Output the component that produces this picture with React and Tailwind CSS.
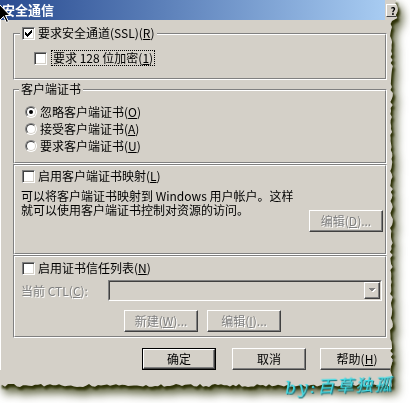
import React from 'react';

const tornClip = () => {
  let s = 11;
  const rnd = () => {
    s = (s * 9301 + 49297) % 233280;
    return s / 233280;
  };
  const pts = ['0px 0px', '399px 0px'];
  for (let y = 0; y <= 384; y += 3) {
    const base = y < 20 ? 398 : 393;
    pts.push(`${(base - rnd() * 3).toFixed(1)}px ${y}px`);
  }
  for (let x = 392; x >= 0; x -= 3) {
    pts.push(`${x}px ${(387 - rnd() * 3).toFixed(1)}px`);
  }
  pts.push('0px 386px');
  return `polygon(${pts.join(',')})`;
};

const Check = ({ checked }) => (
  <span className="relative block w-[13px] h-[13px] shrink-0 bg-white border border-t-[#808080] border-l-[#808080] border-r-white border-b-white shadow-[inset_1px_1px_0_#404040,inset_-1px_-1px_0_#d4d0c8]">
    {checked && (
      <svg className="absolute left-[1px] top-[1px]" width="9" height="9" viewBox="0 0 9 9" shapeRendering="crispEdges">
        <path d="M1 3h1v1h1v1h1V4h1V3h1V2h1V1h1v3H7v1H6v1H5v1H4v1H3V7H2V6H1z" fill="#000" />
      </svg>
    )}
  </span>
);

const Radio = ({ checked }) => (
  <span className="relative block w-[12px] h-[12px] shrink-0 rounded-full bg-white border border-t-[#808080] border-l-[#808080] border-r-white border-b-white">
    <span className="absolute inset-0 rounded-full border border-t-[#404040] border-l-[#404040] border-r-[#d4d0c8] border-b-[#d4d0c8]" />
    {checked && <span className="absolute left-[3px] top-[3px] w-[4px] h-[4px] rounded-full bg-black" />}
  </span>
);

const Btn = ({ children, disabled, className = '' }) => (
  <div
    className={`flex items-center justify-center w-[74px] h-[22px] bg-[#d4d0c8] border border-t-white border-l-white border-r-[#404040] border-b-[#404040] shadow-[inset_-1px_-1px_0_#808080] ${
      disabled ? 'text-[#808080] [text-shadow:1px_1px_0_#fff]' : 'text-black'
    } ${className}`}
  >
    {children}
  </div>
);

const Group = ({ label, className = '', children }) => (
  <div className={`relative ml-[12px] w-[374px] border border-t-[#808080] border-l-[#808080] border-r-white border-b-white ${className}`}>
    <div className="h-full border border-t-white border-l-white border-r-[#808080] border-b-[#808080]">{children}</div>
    {label}
  </div>
);

const Cursor = () => (
  <svg className="absolute left-[-2px] top-[4px]" width="13" height="20" viewBox="0 0 13 20">
    <path d="M1.5 0.5 L1.5 16.5 L5.5 12.5 L8.5 18.5 L10.5 17.5 L7.5 11.5 L12 11.5 Z" fill="#000" stroke="#fff" strokeWidth="1" />
  </svg>
);

export default function App() {
  return (
    <div className="relative w-[410px] h-[403px] bg-white overflow-hidden font-['Noto_Sans_CJK_SC','Noto_Sans',sans-serif] text-[12px] leading-[14px] text-black">
      <div className="[filter:drop-shadow(2px_3px_1px_#2d3106)_drop-shadow(3px_5px_5px_rgba(50,55,10,0.8))]">
        <div className="w-[400px] h-[392px] bg-[#d4d0c8] flex flex-col" style={{ clipPath: tornClip() }}>
          <div className="flex h-[20px] shrink-0">
            <div className="flex items-center w-[387px] bg-linear-to-r from-[#2a4b90] to-[#a8ccf2] pl-[2px]">
              <span className="text-white font-bold text-[13px] leading-[16px]">安全通信</span>
            </div>
            <div className="mt-[4px] ml-[1px] w-[14px] h-[13px] flex items-center justify-center bg-[#d4d0c8] border border-t-white border-l-white border-r-[#404040] border-b-[#404040] text-[10px] font-bold leading-[10px]">
              ?
            </div>
          </div>

          <div className="flex flex-col pt-[13px] border-l border-l-white">
            <Group
              className="h-[47px]"
              label={
                <div className="absolute left-[6px] -top-[9px] h-[16px] px-[2px] bg-[#d4d0c8] flex items-center gap-[3px]">
                  <Check checked />
                  <span>
                    要求安全通道(SSL)(<u>R</u>)
                  </span>
                </div>
              }
            >
              <div className="mt-[15px] h-[16px] flex items-center pl-[19px] gap-[4px]">
                <Check />
                <span className="border border-dotted border-black px-[1px] leading-[14px]">
                  要求 128 位加密(<u>1</u>)
                </span>
              </div>
            </Group>

            <Group
              className="mt-[9px] h-[75px]"
              label={
                <div className="absolute left-[5px] -top-[8px] px-[2px] bg-[#d4d0c8] leading-[14px]">客户端证书</div>
              }
            >
              <div className="pt-[12px] pl-[10px] flex flex-col">
                <div className="h-[17px] flex items-center gap-[3px]">
                  <Radio checked />
                  <span>
                    忽略客户端证书(<u>O</u>)
                  </span>
                </div>
                <div className="h-[17px] flex items-center gap-[3px]">
                  <Radio />
                  <span>
                    接受客户端证书(<u>A</u>)
                  </span>
                </div>
                <div className="h-[17px] flex items-center gap-[3px]">
                  <Radio />
                  <span>
                    要求客户端证书(<u>U</u>)
                  </span>
                </div>
              </div>
            </Group>

            <Group className="h-[91px]">
              <div className="mt-[2px] h-[16px] flex items-center pl-[7px] gap-[3px]">
                <Check />
                <span>
                  启用客户端证书映射(<u>L</u>)
                </span>
              </div>
              <div className="flex pl-[6px] mt-[5px]">
                <p className="w-[285px] leading-[14px]">
                  可以将客户端证书映射到 Windows 用户帐户。这样
                  <br />
                  就可以使用客户端证书控制对资源的访问。
                </p>
                <Btn disabled className="ml-auto mr-[2px] mt-[21px]">
                  编辑(<u>D</u>)...
                </Btn>
              </div>
            </Group>

            <Group className="h-[83px]">
              <div className="mt-[3px] h-[16px] flex items-center pl-[7px] gap-[3px]">
                <Check />
                <span>
                  启用证书信任列表(<u>N</u>)
                </span>
              </div>
              <div className="mt-[4px] h-[21px] flex items-center pl-[6px]">
                <span className="w-[87px] text-[#808080] [text-shadow:1px_1px_0_#fff]">
                  当前 CTL(<u>C</u>):
                </span>
                <div className="flex w-[274px] h-[21px] border border-t-[#808080] border-l-[#808080] border-r-white border-b-white">
                  <div className="flex flex-1 justify-end bg-[#d4d0c8] border border-t-[#404040] border-l-[#404040] border-r-[#d4d0c8] border-b-[#d4d0c8]">
                    <div className="w-[16px] h-full flex items-center justify-center bg-[#d4d0c8] border border-t-white border-l-white border-r-[#404040] border-b-[#404040] shadow-[inset_-1px_-1px_0_#808080]">
                      <svg width="8" height="5" viewBox="0 0 8 5" shapeRendering="crispEdges">
                        <path d="M1 1h7L4.5 4.5z" fill="#fff" />
                        <path d="M0 0h7L3.5 3.5z" fill="#808080" />
                      </svg>
                    </div>
                  </div>
                </div>
              </div>
              <div className="mt-[9px] flex pl-[109px] gap-[9px]">
                <Btn disabled>
                  新建(<u>W</u>)...
                </Btn>
                <Btn disabled>
                  编辑(<u>I</u>)...
                </Btn>
              </div>
            </Group>

            <div className="mt-[10px] flex pl-[141px]">
              <div className="w-[74px] h-[22px] border border-black">
                <Btn className="w-full h-full">确定</Btn>
              </div>
              <Btn className="ml-[16px]">取消</Btn>
              <Btn className="ml-[14px]">
                帮助(<u>H</u>)
              </Btn>
            </div>
          </div>
        </div>
      </div>

      <Cursor />

      <div className="absolute left-[285px] top-[376px] italic text-[17px] leading-[20px] tracking-[2px] text-[#42dce6] [text-shadow:1px_1px_0_#1b6f78] -rotate-2 font-['DejaVu_Serif','Noto_Sans_CJK_SC',serif]">
        by:百草独孤
      </div>
    </div>
  );
}
